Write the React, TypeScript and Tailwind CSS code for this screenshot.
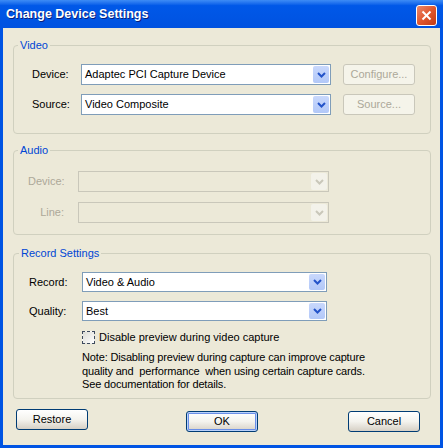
import React from 'react';

function Chevron({ disabled }: { disabled?: boolean }) {
    return (
        <svg width="9" height="6" viewBox="0 0 9 6">
            <polyline
                points="1,1 4.5,4.5 8,1"
                fill="none"
                stroke={disabled ? '#C9C7BA' : '#2353C9'}
                strokeWidth="2"
            />
        </svg>
    );
}

function Combo({ value, width, height = 21, disabled }: { value?: string; width: number; height?: number; disabled?: boolean }) {
    return (
        <div
            className={`flex items-stretch border p-[1px] ${disabled ? 'border-[#C9C7BA] bg-[#ECE9D8]' : 'border-[#7F9DB9] bg-white'}`}
            style={{ width, height }}
        >
            <div className="flex-1 flex items-center pl-[2px] text-black">{value}</div>
            <div
                className={`w-[16px] flex items-center justify-center rounded-[2px] ${
                    disabled ? 'bg-[#F3F2EA]' : 'bg-gradient-to-b from-[#C9D8FC] to-[#B2C8F8]'
                }`}
            >
                <Chevron disabled={disabled} />
            </div>
        </div>
    );
}

function Button({ label, disabled, focused, className = '' }: { label: string; disabled?: boolean; focused?: boolean; className?: string }) {
    if (disabled) {
        return (
            <div className={`w-[72px] h-[21px] rounded-[3px] border border-[#C9C7BA] bg-[#F5F4EA] flex items-center justify-center text-[#ACA899] ${className}`}>
                {label}
            </div>
        );
    }
    return (
        <div
            className={`w-[72px] h-[21px] rounded-[3px] border border-[#003C74] bg-gradient-to-b from-white via-[#F4F3EE] to-[#D6D0C5] flex items-center justify-center text-black ${
                focused ? 'shadow-[inset_0_0_0_1px_#B9D1FA,inset_0_0_0_2px_#6A8FE8]' : ''
            } ${className}`}
        >
            {label}
        </div>
    );
}

export default function App() {
    return (
        <div className="w-[443px] h-[448px] bg-[#0054E3] flex flex-col font-['Liberation_Sans',Arial,sans-serif] text-[11px] leading-[13px] text-black">
            {/* Title bar */}
            <div className="h-[28px] shrink-0 flex items-center justify-between pl-[6px] pr-[6px] bg-gradient-to-b from-[#3D8CF5] via-[#0058E8] via-[20%] to-[#0052E0]">
                <span className="text-white font-bold text-[12.5px] [text-shadow:1px_1px_0_#0A1F7A]">Change Device Settings</span>
                <div className="w-[21px] h-[21px] mt-[2px] rounded-[3px] border border-white bg-gradient-to-br from-[#E9876A] via-[#E1572D] to-[#C23A12] flex items-center justify-center">
                    <svg width="11" height="11" viewBox="0 0 11 11">
                        <line x1="1.5" y1="1.5" x2="9.5" y2="9.5" stroke="white" strokeWidth="2" />
                        <line x1="9.5" y1="1.5" x2="1.5" y2="9.5" stroke="white" strokeWidth="2" />
                    </svg>
                </div>
            </div>

            {/* Body */}
            <div className="flex-1 mx-[3px] mb-[3px] bg-[#ECE9D8] flex flex-col">
                {/* Video */}
                <fieldset className="mt-[11px] ml-[10px] w-[418px] border border-[#D0D0BF] rounded-[4px] pt-[12px] pb-[18px]">
                    <legend className="ml-[4px] px-[2px] text-[#0046D5]">Video</legend>
                    <div className="flex items-center pl-[18px]">
                        <span className="w-[49px]">Device:</span>
                        <Combo value="Adaptec PCI Capture Device" width={250} />
                        <Button label="Configure..." disabled className="ml-[12px]" />
                    </div>
                    <div className="flex items-center pl-[18px] mt-[9px]">
                        <span className="w-[49px]">Source:</span>
                        <Combo value="Video Composite" width={250} />
                        <Button label="Source..." disabled className="ml-[12px]" />
                    </div>
                </fieldset>

                {/* Audio */}
                <fieldset className="mt-[10px] ml-[10px] w-[418px] border border-[#D0D0BF] rounded-[4px] pt-[14px] pb-[11px]">
                    <legend className="ml-[4px] px-[2px] text-[#0046D5]">Audio</legend>
                    <div className="flex items-center pl-[14px]">
                        <span className="w-[36px] text-right text-[#ACA899]">Device:</span>
                        <div className="ml-[14px]">
                            <Combo width={251} disabled />
                        </div>
                    </div>
                    <div className="flex items-center pl-[14px] mt-[10px]">
                        <span className="w-[36px] text-right text-[#ACA899]">Line:</span>
                        <div className="ml-[14px]">
                            <Combo width={251} disabled />
                        </div>
                    </div>
                </fieldset>

                {/* Record Settings */}
                <fieldset className="mt-[12px] ml-[10px] w-[418px] border border-[#D0D0BF] rounded-[4px] pt-[12px] pb-[6px]">
                    <legend className="ml-[5px] px-[2px] text-[#0046D5]">Record Settings</legend>
                    <div className="flex items-center pl-[15px]">
                        <span className="w-[53px]">Record:</span>
                        <Combo value="Video & Audio" width={245} height={20} />
                    </div>
                    <div className="flex items-center pl-[15px] mt-[9px]">
                        <span className="w-[53px]">Quality:</span>
                        <Combo value="Best" width={245} height={20} />
                    </div>
                    <div className="flex items-center pl-[68px] mt-[10px]">
                        <div className="w-[13px] h-[13px] border border-dashed border-[#3E4B5E] bg-gradient-to-br from-[#DCDCD5] to-white" />
                        <span className="ml-[4px]">Disable preview during video capture</span>
                    </div>
                    <p className="pl-[68px] mt-[7px] leading-[13.5px] tracking-[-0.15px]">
                        Note: Disabling preview during capture can improve capture
                        <br />
                        quality and&nbsp; performance&nbsp; when using certain capture cards.
                        <br />
                        See documentation for details.
                    </p>
                </fieldset>

                {/* Buttons */}
                <div className="flex items-start">
                    <Button label="Restore" className="ml-[13px] mt-[10px]" />
                    <Button label="OK" focused className="ml-[98px] mt-[12px]" />
                    <Button label="Cancel" className="ml-[90px] mt-[12px]" />
                </div>
            </div>
        </div>
    );
}
